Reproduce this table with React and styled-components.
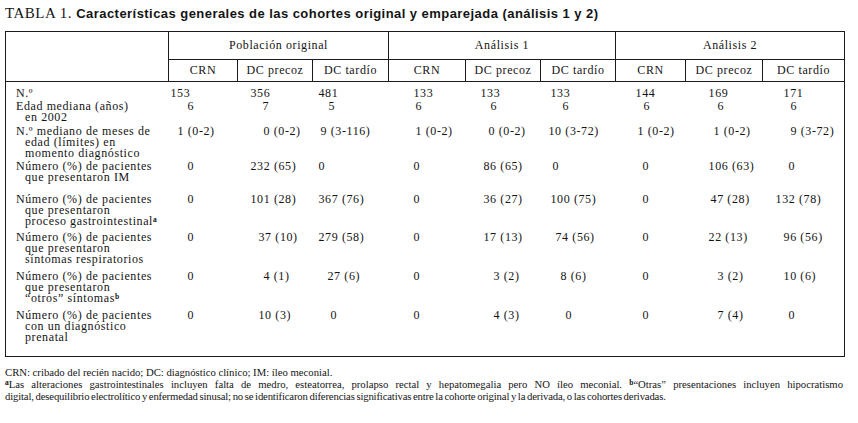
import React from "react";
import styled, { createGlobalStyle } from "styled-components";

const GlobalStyle = createGlobalStyle`
  html, body {
    margin: 0;
    padding: 0;
    background: #fff;
  }
  body {
    font-family: "Liberation Serif", "Times New Roman", serif;
    color: #141414;
  }
`;

const Page = styled.div`
  width: 858px;
  height: 423px;
  padding-left: 5px;
  box-sizing: border-box;
  overflow: hidden;
`;

const Caption = styled.div`
  height: 31px;
  padding-top: 3px;
  box-sizing: border-box;
  line-height: 20px;
  white-space: nowrap;
`;

const CaptionLabel = styled.span`
  font-family: "Liberation Serif", serif;
  font-size: 15px;
  letter-spacing: 0.5px;
`;

const CaptionTitle = styled.span`
  font-family: "Liberation Sans", Arial, sans-serif;
  font-weight: bold;
  font-size: 13px;
  letter-spacing: 0.45px;
`;

const Table = styled.table`
  border-collapse: collapse;
  table-layout: fixed;
  width: 840px;
  border: 1px solid #1b1b1b;
  font-family: "Liberation Serif", "Times New Roman", serif;
  font-size: 12px;
  letter-spacing: 0.6px;
  line-height: 11px;
`;

const HeadCell = styled.th`
  border: 1px solid #1b1b1b;
  font-weight: normal;
  text-align: center;
  vertical-align: middle;
  padding: 0;
  height: ${(p) => p.$h}px;
`;

const Row = styled.tr`
  height: ${(p) => p.$h}px;
`;

const Stub = styled.td`
  vertical-align: top;
  padding: ${(p) => p.$pt}px 0 0 10px;
  white-space: nowrap;
`;

const StubLine = styled.div`
  padding-left: ${(p) => (p.$cont ? 9 : 0)}px;
`;

const Value = styled.td`
  vertical-align: top;
  padding: ${(p) => p.$pt}px 0 0 ${(p) => p.$x}px;
  white-space: nowrap;
`;

const Sup = styled.sup`
  font-size: 7.5px;
  line-height: 0;
  letter-spacing: 0;
  vertical-align: 3px;
  font-weight: bold;
`;

const Notes = styled.div`
  margin-top: 9px;
  width: 838px;
  font-family: "Liberation Serif", "Times New Roman", serif;
  font-size: 10.7px;
  line-height: 12px;
  white-space: nowrap;
`;

const NoteLine = styled.div`
  text-align: ${(p) => (p.$justify ? "justify" : "left")};
  text-align-last: ${(p) => (p.$justify ? "justify" : "left")};
  letter-spacing: ${(p) => (p.$tight ? "-0.15px" : "0")};
  word-spacing: ${(p) => (p.$tight ? "-0.8px" : "0")};
`;

const cols = [163, 69, 75, 76, 77, 75, 75, 70, 77, 82];
const groups = ["Población original", "Análisis 1", "Análisis 2"];
const subs = ["CRN", "DC precoz", "DC tardío"];

const rows = [
  {
    h: 13,
    lines: ["N.º"],
    vals: [["153", 2], ["356", 13], ["481", 6], ["133", 25], ["133", 15], ["133", 10], ["144", 20], ["169", 23], ["171", 21]],
  },
  {
    h: 25,
    lines: ["Edad mediana (años)", "en 2002"],
    vals: [["6", 19], ["7", 25], ["5", 16], ["6", 27], ["6", 25], ["6", 22], ["6", 28], ["6", 32], ["6", 28]],
  },
  {
    h: 35,
    lines: ["N.º mediano de meses de", "edad (límites) en", "momento diagnóstico"],
    vals: [["1 (0-2)", 9], ["0 (0-2)", 26], ["9 (3-116)", 8], ["1 (0-2)", 27], ["0 (0-2)", 23], ["10 (3-72)", 8], ["1 (0-2)", 22], ["1 (0-2)", 28], ["9 (3-72)", 28]],
  },
  {
    h: 33,
    lines: ["Número (%) de pacientes", "que presentaron IM"],
    vals: [["0", 19], ["232 (65)", 13], ["0", 6], ["0", 25], ["86 (65)", 18], ["0", 12], ["0", 27], ["106 (63)", 23], ["0", 26]],
  },
  {
    h: 38,
    lines: ["Número (%) de pacientes", "que presentaron", "proceso gastrointestinal"],
    sup: "a",
    vals: [["0", 19], ["101 (28)", 13], ["367 (76)", 6], ["0", 25], ["36 (27)", 18], ["100 (75)", 10], ["0", 27], ["47 (28)", 25], ["132 (78)", 13]],
  },
  {
    h: 39,
    lines: ["Número (%) de pacientes", "que presentaron", "síntomas respiratorios"],
    vals: [["0", 19], ["37 (10)", 21], ["279 (58)", 6], ["0", 25], ["17 (13)", 18], ["74 (56)", 15], ["0", 27], ["22 (13)", 23], ["96 (56)", 21]],
  },
  {
    h: 39,
    lines: ["Número (%) de pacientes", "que presentaron", "“otros” síntomas"],
    sup: "b",
    vals: [["0", 19], ["4 (1)", 26], ["27 (6)", 15], ["0", 25], ["3 (2)", 28], ["8 (6)", 20], ["0", 27], ["3 (2)", 32], ["10 (6)", 21]],
  },
  {
    h: 47,
    lines: ["Número (%) de pacientes", "con un diagnóstico", "prenatal"],
    vals: [["0", 19], ["10 (3)", 21], ["0", 18], ["0", 25], ["4 (3)", 28], ["0", 25], ["0", 27], ["7 (4)", 32], ["0", 26]],
  },
];

export default function App() {
  return (
    <Page>
      <GlobalStyle />
      <Caption>
        <CaptionLabel>TABLA 1. </CaptionLabel>
        <CaptionTitle>
          Características generales de las cohortes original y emparejada (análisis 1 y 2)
        </CaptionTitle>
      </Caption>

      <Table>
        <colgroup>
          {cols.map((w, i) => (
            <col key={i} style={{ width: w }} />
          ))}
        </colgroup>
        <thead>
          <tr>
            <HeadCell rowSpan={2} $h={27} />
            {groups.map((g) => (
              <HeadCell key={g} colSpan={3} $h={27}>
                {g}
              </HeadCell>
            ))}
          </tr>
          <tr>
            {groups.map((g) =>
              subs.map((s) => (
                <HeadCell key={g + s} $h={21}>
                  {s}
                </HeadCell>
              ))
            )}
          </tr>
        </thead>
        <tbody>
          {rows.map((r, ri) => {
            const pt = ri === 0 ? 6 : 0;
            return (
              <Row key={ri} $h={r.h + pt}>
                <Stub $pt={pt}>
                  {r.lines.map((l, li) => (
                    <StubLine key={li} $cont={li > 0}>
                      {l}
                      {r.sup && li === r.lines.length - 1 && <Sup>{r.sup}</Sup>}
                    </StubLine>
                  ))}
                </Stub>
                {r.vals.map(([v, x], ci) => (
                  <Value key={ci} $x={x} $pt={pt}>
                    {v}
                  </Value>
                ))}
              </Row>
            );
          })}
        </tbody>
      </Table>

      <Notes>
        <NoteLine>CRN: cribado del recién nacido; DC: diagnóstico clínico; IM: íleo meconial.</NoteLine>
        <NoteLine $justify>
          <Sup>a</Sup>Las alteraciones gastrointestinales incluyen falta de medro, esteatorrea, prolapso rectal y
          hepatomegalia pero NO íleo meconial. <Sup>b</Sup>“Otras” presentaciones incluyen hipocratismo
        </NoteLine>
        <NoteLine $tight>
          digital, desequilibrio electrolítico y enfermedad sinusal; no se identificaron diferencias significativas
          entre la cohorte original y la derivada, o las cohortes derivadas.
        </NoteLine>
      </Notes>
    </Page>
  );
}
